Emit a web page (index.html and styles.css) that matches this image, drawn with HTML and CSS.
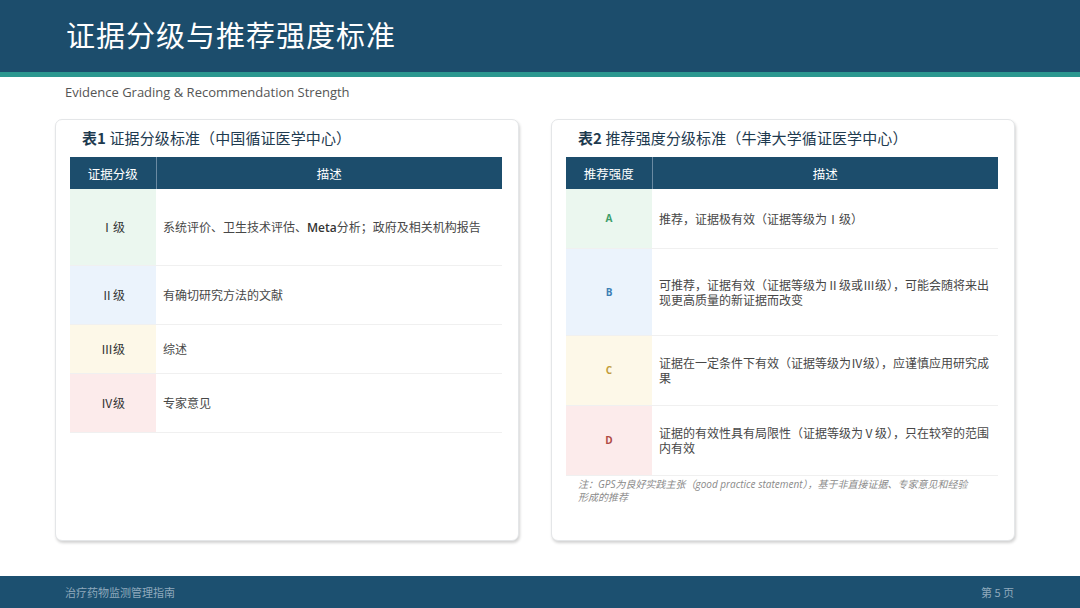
FILE: index.html
```html
<!DOCTYPE html>
<html lang="zh-CN">
<head>
<meta charset="utf-8">
<title>证据分级与推荐强度标准</title>
<link rel="stylesheet" href="styles.css">
</head>
<body>
<div class="slide">
  <header class="top">
    <h1 class="title">证据分级与推荐强度标准</h1>
  </header>
  <div class="subtitle">Evidence Grading &amp; Recommendation Strength</div>
  <main class="cards">
    <section class="card">
      <h2 class="card-title"><span class="num">表1</span> 证据分级标准（中国循证医学中心）</h2>
      <table class="grid">
        <thead>
          <tr><th class="c1">证据分级</th><th>描述</th></tr>
        </thead>
        <tbody>
          <tr class="h76"><td class="c1 green">Ⅰ级</td><td class="desc">系统评价、卫生技术评估、<span class="lat">Meta</span>分析；政府及相关机构报告</td></tr>
          <tr class="h59"><td class="c1 blue">Ⅱ级</td><td class="desc">有确切研究方法的文献</td></tr>
          <tr class="h49"><td class="c1 yellow">Ⅲ级</td><td class="desc">综述</td></tr>
          <tr class="h59"><td class="c1 pink">Ⅳ级</td><td class="desc">专家意见</td></tr>
        </tbody>
      </table>
    </section>
    <section class="card">
      <h2 class="card-title"><span class="num">表2</span> 推荐强度分级标准（牛津大学循证医学中心）</h2>
      <table class="grid">
        <thead>
          <tr><th class="c1">推荐强度</th><th>描述</th></tr>
        </thead>
        <tbody>
          <tr class="h59"><td class="c1 green letter la">A</td><td class="desc">推荐，证据极有效（证据等级为Ⅰ级）</td></tr>
          <tr class="h87"><td class="c1 blue letter lb">B</td><td class="desc">可推荐，证据有效（证据等级为Ⅱ级或Ⅲ级），可能会随将来出现更高质量的新证据而改变</td></tr>
          <tr class="h70"><td class="c1 yellow letter lc">C</td><td class="desc">证据在一定条件下有效（证据等级为Ⅳ级），应谨慎应用研究成果</td></tr>
          <tr class="h70"><td class="c1 pink letter ld">D</td><td class="desc">证据的有效性具有局限性（证据等级为Ⅴ级），只在较窄的范围内有效</td></tr>
        </tbody>
      </table>
      <p class="note">注：GPS为良好实践主张（good practice statement），基于非直接证据、专家意见和经验形成的推荐</p>
    </section>
  </main>
  <footer class="bottom">
    <span>治疗药物监测管理指南</span>
    <span>第 5 页</span>
  </footer>
</div>
</body>
</html>
```

FILE: styles.css
```css
* { box-sizing: border-box; }
html, body { margin: 0; padding: 0; background: #fff; }
body { font-family: "Noto Sans CJK SC", "Noto Sans", sans-serif; }

.slide {
  width: 1080px;
  height: 608px;
  display: flex;
  flex-direction: column;
  overflow: hidden;
}

.top {
  height: 77px;
  background: #1c4d6c;
  border-bottom: 5px solid #2b978f;
  padding-left: 66px;
  display: flex;
  align-items: center;
}
.title {
  margin: 0;
  margin-top: -4px;
  font-size: 29px;
  font-weight: 400;
  color: #fff;
  letter-spacing: 1px;
}

.subtitle {
  height: 42px;
  padding: 6px 0 0 65px;
  font-family: "Open Sans", "Noto Sans", sans-serif;
  font-size: 13px;
  color: #555;
}

.cards {
  display: flex;
  gap: 32px;
  padding-left: 55px;
  height: 422px;
}
.card {
  width: 464px;
  height: 422px;
  background: #fff;
  border: 1px solid #e4e6e8;
  border-radius: 7px;
  box-shadow: 1px 2px 3px rgba(0,0,0,0.18);
  padding: 0 16px 0 14px;
}
.card-title {
  margin: 0;
  height: 37px;
  padding: 7px 0 0 12px;
  font-size: 15px;
  font-weight: 400;
  color: #1e3a4f;
  letter-spacing: 0.1px;
}
.card-title .num { font-weight: 700; }

.grid {
  width: 432px;
  border-collapse: collapse;
  table-layout: fixed;
}
.grid th {
  height: 32px;
  background: #1c4d6c;
  color: #fff;
  font-size: 12.5px;
  font-weight: 400;
  text-align: center;
  padding: 0;
  border-left: 1px solid #6a8aa2;
}
.grid th.c1 { border-left: none; width: 86px; }
.grid td {
  padding: 0;
  font-size: 12px;
  color: #3a3a3a;
  border-bottom: 1px solid #f0f0f0;
  vertical-align: middle;
}
.grid td.c1 { text-align: center; color: #333; }
.grid td.desc { padding: 0 8px 0 7px; color: #474747; line-height: 15px; }
.lat { font-family: "Open Sans", "Noto Sans", sans-serif; }
.grid td.desc .lat { font-weight: 600; color: #333; }

.green { background: #ebf7ef; }
.blue { background: #ebf3fc; }
.yellow { background: #fdf8e8; }
.pink { background: #fcebeb; }

.grid td.letter { font-family: "Open Sans", "Noto Sans", sans-serif; font-weight: 700; font-size: 10px; }
.grid td.la { color: #3e9e6a; }
.grid td.lb { color: #3d7fb5; }
.grid td.lc { color: #c29d3a; }
.grid td.ld { color: #b04a44; }

.h76 { height: 76px; }
.h59 { height: 59px; }
.h49 { height: 49px; }
.h70 { height: 70px; }
.h87 { height: 87px; }

.note {
  margin: 2px 0 0;
  padding: 0 24px 0 12px;
  font-family: "Open Sans", "Noto Sans CJK SC", sans-serif;
  font-size: 10px;
  line-height: 13px;
  font-style: italic;
  color: #8a8a8a;
}

.bottom {
  margin-top: auto;
  height: 32px;
  background: #1c5070;
  display: flex;
  justify-content: space-between;
  align-items: center;
  padding: 0 66px 0 65px;
  font-size: 11px;
  color: #8fa9bc;
}
```
